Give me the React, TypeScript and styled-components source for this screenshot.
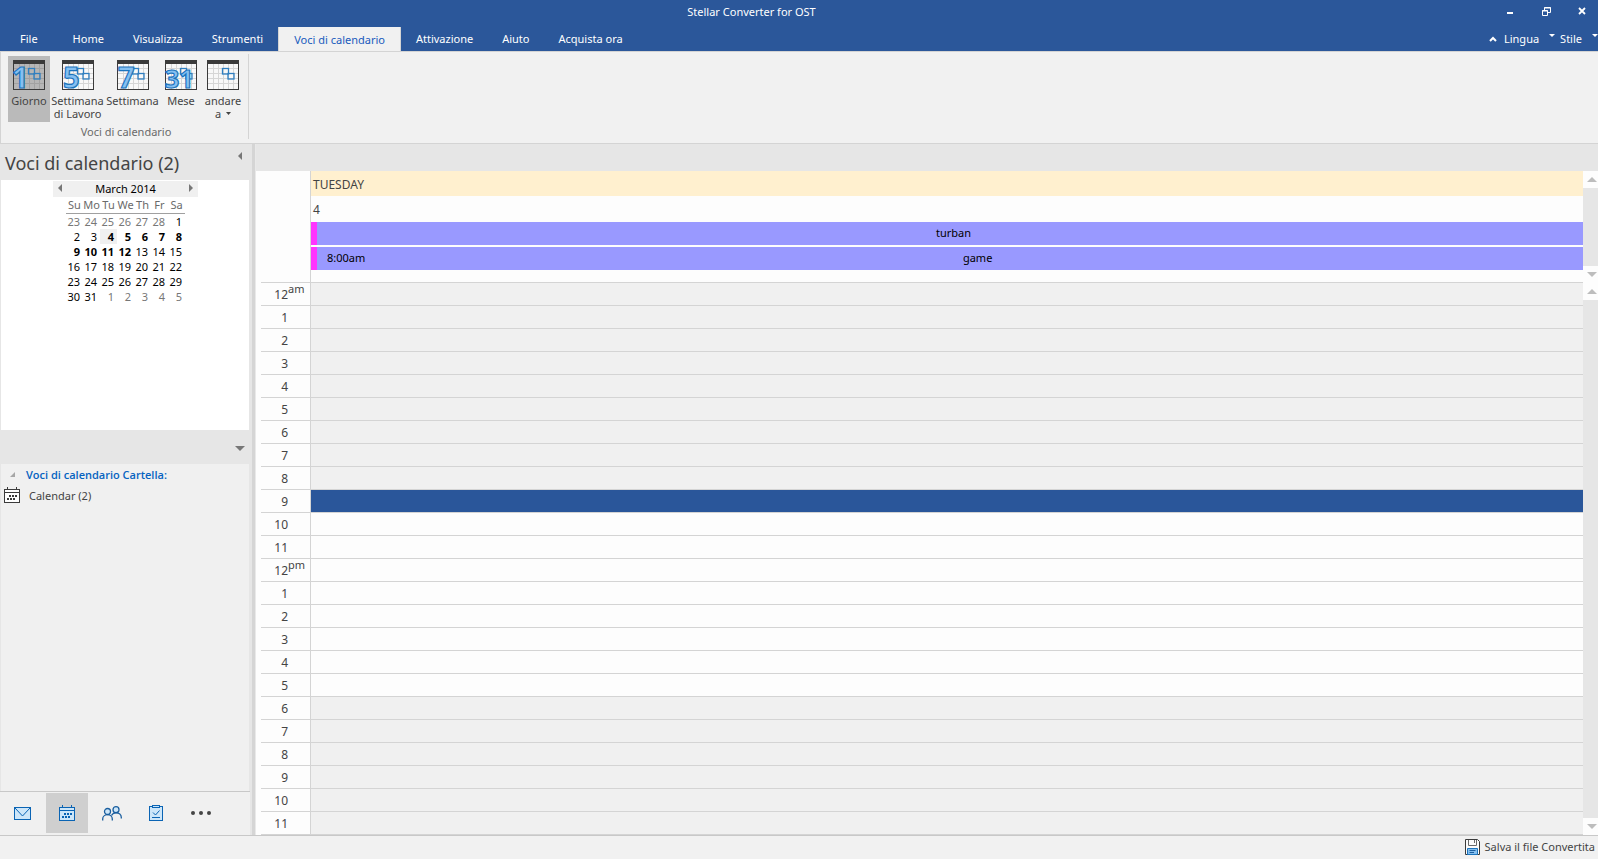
import React from "react";
import styled, { createGlobalStyle } from "styled-components";

const color = {
  brand: "#2b579a",
  ribbon: "#f1f1f1",
  panel: "#e6e6e6",
  paper: "#fdfdfd",
  off: "#f0f0f0",
  line: "#d4d4d4",
  text: "#444444",
  link: "#0563c1",
  icon: "#0a64b4",
  iconFill: "#cde6f9",
};

const GlobalStyle = createGlobalStyle`
  * { box-sizing: border-box; }
  html, body { margin: 0; }
  body {
    background: ${color.ribbon};
    color: ${color.text};
    font: 11px/13px "Noto Sans", "Open Sans", sans-serif;
  }
  button {
    margin: 0;
    padding: 0;
    border: 0;
    background: none;
    color: inherit;
    font: inherit;
    white-space: nowrap;
  }
  svg { display: block; flex: none; }
  table { border-collapse: collapse; border-spacing: 0; }
`;

const Window = styled.div`
  display: flex;
  flex-direction: column;
  min-height: 100vh;
`;

/* ---------- title bar and tabs ---------- */

const TitleBar = styled.header`
  display: flex;
  align-items: flex-start;
  height: 27px;
  background: ${color.brand};
  color: #fff;
`;

const Title = styled.h1`
  flex: 1;
  margin: 0;
  padding-left: 11px;
  font-size: 11px;
  font-weight: 400;
  line-height: 24px;
  text-align: center;
`;

const WindowButtons = styled.div`
  display: flex;
  width: 108px;
  margin-right: -2px;
`;

const WindowButton = styled.button`
  display: flex;
  flex: 1;
  align-items: center;
  justify-content: center;
  height: 22px;
  color: #fff;
`;

const TabBar = styled.nav`
  display: flex;
  gap: 1px;
  height: 24px;
  background: ${color.brand};
`;

const Tab = styled.button<{ $active?: boolean; $first?: boolean }>`
  height: ${(p) => (p.$active ? "25px" : "24px")};
  padding: 0 ${(p) => (p.$first ? "20px" : p.$active ? "15px" : "14px")};
  border: solid ${(p) => (p.$active ? color.line : "transparent")};
  border-width: 0 ${(p) => (p.$active ? "1px" : "0")};
  background: ${(p) => (p.$active ? color.ribbon : "transparent")};
  color: ${(p) => (p.$active ? "#185abd" : "#fff")};
  line-height: 24px;
`;

const TabTools = styled.div`
  display: flex;
  gap: 5px;
  margin-left: auto;
  padding-bottom: 1px;
  color: #fff;
`;

const ToolButton = styled.button`
  display: flex;
  align-items: center;
  gap: 7px;
  & > svg:last-child { margin: -6px 0 0 3px; }
`;

/* ---------- ribbon ---------- */

const Ribbon = styled.section`
  display: flex;
  height: 93px;
  border: 1px solid ${color.line};
  border-right: 0;
`;

const RibbonGroup = styled.div`
  display: flex;
  flex-direction: column;
  margin: 2px 0 4px;
  padding: 2px 4px 0 7px;
  border-right: 1px solid ${color.line};
`;

const RibbonButtons = styled.div`
  display: flex;
`;

const RibbonButton = styled.button<{ $wide?: boolean; $active?: boolean }>`
  display: flex;
  flex-direction: column;
  align-items: center;
  gap: 4px;
  width: ${(p) => (p.$wide ? "55px" : "42px")};
  height: 66px;
  padding-top: 4px;
  background: ${(p) => (p.$active ? "#bababa" : "transparent")};
`;

const RibbonLabel = styled.span`
  display: block;
`;

const GroupLabel = styled.div`
  padding-top: 3px;
  color: #6a6a6a;
  text-align: center;
`;

/* ---------- body ---------- */

const Body = styled.div`
  display: flex;
  flex: 1;
`;

const Sidebar = styled.aside`
  display: flex;
  flex-direction: column;
  width: 252px;
  padding: 0 2px 0 0;
  background: ${color.panel};
`;

const Splitter = styled.div`
  width: 4px;
  border-right: 1px solid #e9e9e9;
  background: #d5d5d5;
`;

const SideHeader = styled.div`
  display: flex;
  justify-content: space-between;
  height: 36px;
  padding: 0 8px 0 5px;
`;

const SideTitle = styled.h2`
  margin: 0;
  font-size: 18px;
  font-weight: 400;
  line-height: 38px;
`;

const CollapseButton = styled.button`
  align-self: flex-start;
  padding-top: 8px;
`;

const DatePane = styled.div`
  height: 250px;
  margin: 0 1px;
  padding: 1px 0 0 52px;
  background: #fff;
`;

const MonthBar = styled.div`
  display: flex;
  align-items: center;
  justify-content: space-between;
  width: 145px;
  height: 16px;
  padding: 0 5px 2px;
  background: ${color.off};
  color: #000;
`;

const MonthTable = styled.table`
  width: 119px;
  margin: 1px 0 0 13px;
  table-layout: fixed;
  color: #000;
`;

const WeekdayCell = styled.th`
  height: 15px;
  padding: 0 0 1px;
  border-bottom: 1px solid #a0a0a0;
  color: #6a6a6a;
  font-weight: 400;
  line-height: 13px;
  text-align: center;
`;

const DateCell = styled.td<{ $muted?: boolean; $busy?: boolean; $today?: boolean }>`
  height: 15px;
  padding: 0 3px 0 0;
  background: ${(p) => (p.$today ? color.off : "transparent")};
  color: ${(p) => (p.$muted ? "#777" : "#000")};
  font-weight: ${(p) => (p.$busy ? 700 : 400)};
  line-height: 15px;
  text-align: right;
`;

const PaneDivider = styled.div`
  display: flex;
  align-items: center;
  justify-content: flex-end;
  height: 34px;
  padding: 2px 5px 0 0;
`;

const FolderPane = styled.div`
  flex: 1;
  margin: 0 1px;
  background: ${color.off};
`;

const FolderHeading = styled.h3`
  display: flex;
  align-items: center;
  gap: 11px;
  height: 22px;
  margin: 0;
  padding: 0 0 2px 9px;
  color: ${color.link};
  font-family: "Open Sans", sans-serif;
  font-size: 11px;
  font-weight: 600;
`;

const FolderItem = styled.button`
  display: flex;
  align-items: center;
  gap: 9px;
  height: 20px;
  padding: 0 0 2px 3px;
`;

const NavBar = styled.nav`
  display: flex;
  height: 44px;
  padding: 1px 0 2px;
  border-top: 1px solid #c8c8c8;
  background: ${color.off};
`;

const NavButton = styled.button<{ $active?: boolean }>`
  display: flex;
  align-items: center;
  justify-content: center;
  width: ${(p) => (p.$active ? "42px" : "45px")};
  margin-left: ${(p) => (p.$active ? "1px" : "0")};
  background: ${(p) => (p.$active ? "#cfcfcf" : "transparent")};
`;

/* ---------- day view ---------- */

const DayView = styled.main`
  display: flex;
  flex: 1;
  flex-direction: column;
  min-width: 0;
`;

const DayViewBar = styled.div`
  height: 27px;
  background: ${color.panel};
`;

const Pane = styled.div<{ $grow?: boolean }>`
  display: flex;
  flex: ${(p) => (p.$grow ? "1" : "none")};
  background: ${color.paper};
`;

const Gutter = styled.div`
  display: flex;
  align-items: flex-end;
  width: 55px;
  padding-left: 5px;
  border-right: 1px solid ${color.line};
  &::after {
    content: "";
    flex: 1;
    border-bottom: 1px solid ${color.line};
  }
`;

const AllDay = styled.div`
  display: flex;
  flex: 1;
  flex-direction: column;
  height: 112px;
  border-bottom: 1px solid ${color.line};
`;

const DayName = styled.div`
  height: 25px;
  padding-left: 2px;
  background: #fff0cf;
  font-size: 12px;
  line-height: 27px;
`;

const DayNumber = styled.div`
  height: 26px;
  padding-left: 2px;
  font-size: 12px;
  line-height: 27px;
`;

const EventBar = styled.button`
  display: flex;
  align-items: center;
  height: 23px;
  margin-bottom: 2px;
  padding-bottom: 2px;
  border-left: 6px solid #ff33ff;
  background: #9999ff;
  color: #000;
`;

const EventTime = styled.span`
  padding-left: 10px;
`;

const EventTitle = styled.span`
  flex: 1;
  padding-left: 7px;
  text-align: center;
`;

const HourTable = styled.table`
  flex: 1;
  width: 100%;
  border-collapse: separate;
`;

const HourCell = styled.th`
  width: 55px;
  height: 23px;
  padding: 0 0 0 5px;
  border-right: 1px solid ${color.line};
  font-size: 12px;
  font-weight: 400;
`;

const HourLabel = styled.div`
  display: flex;
  height: 23px;
  border-bottom: 1px solid ${color.line};
  line-height: 24px;
`;

const HourNumber = styled.span`
  width: 27px;
  text-align: right;
`;

const Meridiem = styled.span`
  font-size: 11px;
  line-height: 11px;
`;

const Slot = styled.td<{ $kind: "off" | "work" | "selected" }>`
  padding: 0;
  border-bottom: 1px solid ${color.line};
  background: ${(p) =>
    p.$kind === "selected" ? "#2a569a" : p.$kind === "off" ? color.off : color.paper};
`;

const Scrollbar = styled.div`
  display: flex;
  flex-direction: column;
  width: 15px;
  background: ${color.panel};
`;

const ScrollButton = styled.button`
  display: flex;
  align-items: center;
  justify-content: center;
  height: 17px;
  padding-left: 2px;
  background: ${color.paper};
`;

const ScrollTrack = styled.div`
  flex: 1;
`;

/* ---------- status bar ---------- */

const StatusBar = styled.footer`
  display: flex;
  justify-content: flex-end;
  height: 24px;
  padding: 0 3px 2px 0;
  border-top: 1px solid #c8c8c8;
`;

const StatusButton = styled.button`
  display: flex;
  align-items: center;
  gap: 5px;
`;

/* ---------- icons ---------- */

type Direction = "up" | "down" | "left" | "right";

function Triangle({ dir, size = 4, fill = "#777" }: { dir: Direction; size?: number; fill?: string }) {
  const d = size * 2;
  const vertical = dir === "up" || dir === "down";
  const points = {
    up: `0,${size} ${d},${size} ${size},0`,
    down: `0,0 ${d},0 ${size},${size}`,
    left: `${size},0 ${size},${d} 0,${size}`,
    right: `0,0 0,${d} ${size},${size}`,
  }[dir];
  return (
    <svg width={vertical ? d : size} height={vertical ? size : d} aria-hidden="true">
      <polygon points={points} fill={fill} />
    </svg>
  );
}

const Sheet = styled.svg`
  overflow: visible;
`;

const SheetDigits = styled.text`
  font-family: "Open Sans", sans-serif;
  font-weight: 700;
  fill: #85c0f1;
  stroke: #1c74bd;
  stroke-width: 1.2px;
`;

function SheetIcon({ label, x = 1, shade }: { label?: string; x?: number; shade?: boolean }) {
  return (
    <Sheet width="32" height="30" viewBox="0 0 32 30" aria-hidden="true">
      <rect x="0.5" y="0.5" width="31" height="29" fill={shade ? "#b6b6b6" : "#f8f8f8"} stroke="#3b3b3b" />
      <path
        d="M6.5 4V29M11.5 4V29M16.5 4V29M21.5 4V29M26.5 4V29M1 8.5H31M1 13.5H31M1 18.5H31M1 23.5H31"
        stroke={shade ? "#a2a2a2" : "#d6d6d6"}
      />
      <rect width="32" height="4" fill="#3b3b3b" />
      <g fill="none" stroke="#2f7fc0" strokeWidth="1.300">
        <rect x="15.500" y="8.500" width="6" height="5.500" />
        <rect x="21" y="13.500" width="6" height="5.500" />
      </g>
      {label && (
        <SheetDigits x={x} y="28" fontSize={label.length > 1 ? 25 : 29}>{label}</SheetDigits>
      )}
    </Sheet>
  );
}

function MonthIcon({ stroke, fill }: { stroke: string; fill: string }) {
  return (
    <svg width="16" height="16" viewBox="0 0 16 16" aria-hidden="true">
      <rect x="0.5" y="2.5" width="15" height="13" fill={fill} stroke={stroke} />
      <path d="M0 5.5H16M3.5 0V3M12.5 0V3" stroke={stroke} />
      <path d="M5 9H13M3 12H11" stroke={stroke} strokeWidth="2" strokeDasharray="2 1" />
    </svg>
  );
}

const MailIcon = () => (
  <svg width="17" height="13" viewBox="0 0 17 13" fill={color.iconFill} stroke={color.icon} aria-hidden="true">
    <rect x="0.5" y="0.5" width="16" height="12" />
    <path d="M1 1L8.500 9L16 1" />
  </svg>
);

const PeopleIcon = () => (
  <svg width="22" height="15" viewBox="-2 0 22 15" fill="none" stroke="#1b5f9f" strokeWidth="1.300" aria-hidden="true">
    <circle cx="5.500" cy="5.500" r="3" fill={color.iconFill} />
    <path d="M0.700 14.500V13C0.700 10.500 3 8.700 5.500 8.700S10.300 10.500 10.300 13V14.500" />
    <circle cx="14" cy="3.700" r="3" fill={color.iconFill} />
    <path d="M9.500 9.500C10.500 7.500 12 6.800 14 6.800C17 6.800 19.300 8.700 19.300 11.500V12.500" />
  </svg>
);

const TaskIcon = () => (
  <svg width="14" height="16" viewBox="0 0 14 16" fill={color.iconFill} stroke={color.icon} aria-hidden="true">
    <rect x="0.500" y="1.500" width="13" height="14" />
    <rect x="3.500" y="0.500" width="7" height="2" />
    <path d="M4 7.500L6.500 10L10.500 5.500" fill="none" />
    <path d="M3 12.500H11" />
  </svg>
);

const MoreIcon = () => (
  <svg width="20" height="4" viewBox="0 0 20 4" fill={color.text} aria-hidden="true">
    <circle cx="2" cy="2" r="2" />
    <circle cx="10" cy="2" r="2" />
    <circle cx="18" cy="2" r="2" />
  </svg>
);

const SaveIcon = () => (
  <svg width="15" height="16" viewBox="0 0 15 16" aria-hidden="true">
    <path d="M0.500 0.500H12.500L14.500 2.500V15.500H0.500Z" fill="#fbfbfb" stroke="#3b3b3b" />
    <path d="M3.500 1V6.500H11.500V1M9.500 1V4" fill="none" stroke="#6a6a6a" />
    <path d="M2.500 15.500V9.500H12.500V15.500Z" fill="#83bff0" stroke="#1c74bd" />
    <path d="M4.500 11.500H10.500M4.500 13.500H9" stroke="#1c5f9f" />
  </svg>
);

const DropIcon = styled.svg`
  display: inline-block;
  margin: 0 0 3px 2px;
`;

const DropMark = () => (
  <DropIcon width="5" height="3" aria-hidden="true">
    <polygon points="0,0 5,0 2.5,3" fill="#444" />
  </DropIcon>
);

/* ---------- data ---------- */

const tabs = ["File", "Home", "Visualizza", "Strumenti", "Voci di calendario", "Attivazione", "Aiuto", "Acquista ora"];
const weekdays = ["Su", "Mo", "Tu", "We", "Th", "Fr", "Sa"];
const weeks = [
  [23, 24, 25, 26, 27, 28, 1],
  [2, 3, 4, 5, 6, 7, 8],
  [9, 10, 11, 12, 13, 14, 15],
  [16, 17, 18, 19, 20, 21, 22],
  [23, 24, 25, 26, 27, 28, 29],
  [30, 31, 1, 2, 3, 4, 5],
];
const hours = Array.from({ length: 24 }, (_, h) => h);

function slotKind(hour: number) {
  if (hour === 9) return "selected";
  return hour > 9 && hour < 18 ? "work" : "off";
}

function VerticalScroll() {
  return (
    <Scrollbar>
      <ScrollButton aria-label="Scorri su"><Triangle dir="up" size={5} fill="#bdbdbd" /></ScrollButton>
      <ScrollTrack />
      <ScrollButton aria-label="Scorri giù"><Triangle dir="down" size={5} fill="#bdbdbd" /></ScrollButton>
    </Scrollbar>
  );
}

export default function App() {
  return (
    <Window>
      <GlobalStyle />
      <TitleBar>
        <Title>Stellar Converter for OST</Title>
        <WindowButtons>
          <WindowButton aria-label="Riduci a icona">
            <svg width="6" height="6"><rect y="4" width="6" height="2" fill="currentColor" /></svg>
          </WindowButton>
          <WindowButton aria-label="Ripristina">
            <svg width="9" height="9" fill="none" stroke="currentColor">
              <path d="M2.500 3V0.500H8.500V5.500H6M2 1H9" />
              <path d="M0.500 3.500H5.500V8.500H0.500ZM0 4H6" />
            </svg>
          </WindowButton>
          <WindowButton aria-label="Chiudi">
            <svg width="8" height="8" stroke="currentColor" strokeWidth="1.800">
              <path d="M1 1L7 7M7 1L1 7" />
            </svg>
          </WindowButton>
        </WindowButtons>
      </TitleBar>
      <TabBar>
        {tabs.map((name, i) => (
          <Tab key={name} $first={i === 0} $active={i === 4}>{name}</Tab>
        ))}
        <TabTools>
          <ToolButton>
            <svg width="8" height="6" fill="none" stroke="currentColor" strokeWidth="2"><path d="M1 5L4 2L7 5" /></svg>
            Lingua
            <Triangle dir="down" size={3} fill="#fff" />
          </ToolButton>
          <ToolButton>
            Stile
            <Triangle dir="down" size={3} fill="#fff" />
          </ToolButton>
        </TabTools>
      </TabBar>
      <Ribbon>
        <RibbonGroup>
          <RibbonButtons>
            <RibbonButton $active><SheetIcon label="1" x={-1} shade /><RibbonLabel>Giorno</RibbonLabel></RibbonButton>
            <RibbonButton $wide><SheetIcon label="5" /><RibbonLabel>Settimana<br />di Lavoro</RibbonLabel></RibbonButton>
            <RibbonButton $wide><SheetIcon label="7" /><RibbonLabel>Settimana</RibbonLabel></RibbonButton>
            <RibbonButton><SheetIcon label="31" x={0} /><RibbonLabel>Mese</RibbonLabel></RibbonButton>
            <RibbonButton><SheetIcon /><RibbonLabel>andare<br />a <DropMark /></RibbonLabel></RibbonButton>
          </RibbonButtons>
          <GroupLabel>Voci di calendario</GroupLabel>
        </RibbonGroup>
      </Ribbon>
      <Body>
        <Sidebar>
          <SideHeader>
            <SideTitle>Voci di calendario (2)</SideTitle>
            <CollapseButton aria-label="Comprimi"><Triangle dir="left" /></CollapseButton>
          </SideHeader>
          <DatePane>
            <MonthBar>
              <button aria-label="Mese precedente"><Triangle dir="left" /></button>
              March 2014
              <button aria-label="Mese successivo"><Triangle dir="right" /></button>
            </MonthBar>
            <MonthTable>
              <thead>
                <tr>{weekdays.map((d) => <WeekdayCell key={d} scope="col">{d}</WeekdayCell>)}</tr>
              </thead>
              <tbody>
                {weeks.map((week, w) => (
                  <tr key={w}>
                    {week.map((n, i) => {
                      const muted = (w === 0 && n > 20) || (w === 5 && n < 20);
                      return (
                        <DateCell
                          key={i}
                          $muted={muted}
                          $today={w === 1 && n === 4}
                          $busy={(w === 1 || w === 2) && n >= 4 && n <= 12}
                        >
                          {n}
                        </DateCell>
                      );
                    })}
                  </tr>
                ))}
              </tbody>
            </MonthTable>
          </DatePane>
          <PaneDivider>
            <button aria-label="Altro"><Triangle dir="down" size={5} /></button>
          </PaneDivider>
          <FolderPane>
            <FolderHeading>
              <svg width="5" height="5" aria-hidden="true"><polygon points="5,0 5,5 0,5" fill="#a6a6a6" /></svg>
              Voci di calendario Cartella:
            </FolderHeading>
            <FolderItem><MonthIcon stroke="#3b3b3b" fill="#fff" />Calendar (2)</FolderItem>
          </FolderPane>
          <NavBar>
            <NavButton aria-label="Posta"><MailIcon /></NavButton>
            <NavButton aria-label="Calendario" $active><MonthIcon stroke={color.icon} fill={color.iconFill} /></NavButton>
            <NavButton aria-label="Contatti"><PeopleIcon /></NavButton>
            <NavButton aria-label="Attività"><TaskIcon /></NavButton>
            <NavButton aria-label="Altro"><MoreIcon /></NavButton>
          </NavBar>
        </Sidebar>
        <Splitter />
        <DayView>
          <DayViewBar />
          <Pane>
            <Gutter />
            <AllDay>
              <DayName>TUESDAY</DayName>
              <DayNumber>4</DayNumber>
              <EventBar><EventTitle>turban</EventTitle></EventBar>
              <EventBar><EventTime>8:00am</EventTime><EventTitle>game</EventTitle></EventBar>
            </AllDay>
            <VerticalScroll />
          </Pane>
          <Pane $grow>
            <HourTable>
              <tbody>
                {hours.map((h) => (
                  <tr key={h}>
                    <HourCell scope="row">
                      <HourLabel>
                        <HourNumber>{h % 12 || 12}</HourNumber>
                        {h % 12 === 0 && <Meridiem>{h ? "pm" : "am"}</Meridiem>}
                      </HourLabel>
                    </HourCell>
                    <Slot $kind={slotKind(h)} />
                  </tr>
                ))}
              </tbody>
            </HourTable>
            <VerticalScroll />
          </Pane>
        </DayView>
      </Body>
      <StatusBar>
        <StatusButton><SaveIcon />Salva il file Convertita</StatusButton>
      </StatusBar>
    </Window>
  );
}
